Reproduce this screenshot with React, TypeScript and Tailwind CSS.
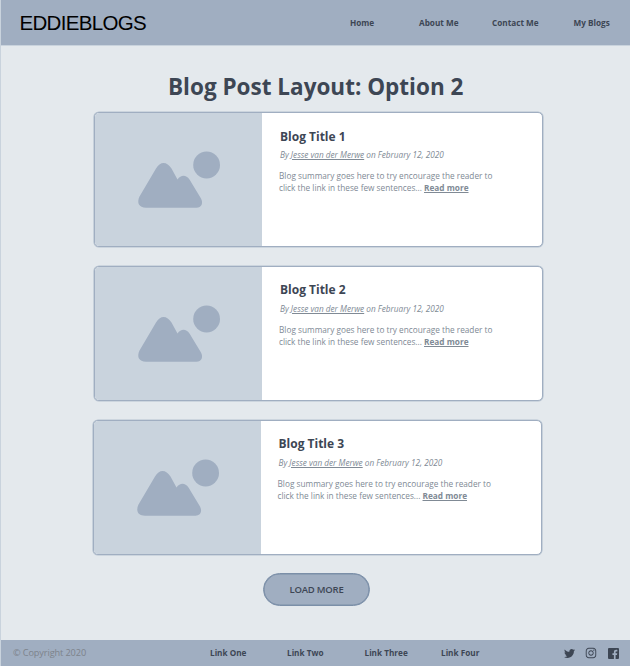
import React from "react";
import { FaTwitter, FaInstagram } from "react-icons/fa";

const posts = [
  { title: "Blog Title 1", box: "ml-[93px] mt-[9px]", heading: "pt-px" },
  { title: "Blog Title 2", box: "ml-[93px] mt-[19px]", heading: "pt-0" },
  { title: "Blog Title 3", box: "ml-[91.5px] mt-[18.5px]", heading: "pt-0" },
];

function Placeholder() {
  return (
    <svg className="h-[133px] w-[167px]" viewBox="0 0 167 133" fill="#a0aec1">
      <circle cx="111.6" cy="52" r="13.4" />
      <path d="M44.5 83.5 L61 55.5 C65 48 72 48 76.5 55.5 L82.5 66.5 C86 61.5 91 61.5 94.5 66.5 L106 85.5 C108.5 90.5 106.5 94.7 101.5 94.7 L51 94.7 C44 94.7 41.5 90 44.5 83.5 Z" />
    </svg>
  );
}

function PostCard({ title, box, heading }: { title: string; box: string; heading: string }) {
  return (
    <article className={`flex h-[135px] w-[449px] shrink-0 overflow-hidden rounded-[5px] border border-[#a0aec1] bg-white shadow-[0_0_0_0.6px_#b4c1cf] ${box}`}>
      <div className="w-[167px] shrink-0 bg-[#c9d3dd]">
        <Placeholder />
      </div>
      <div className="pl-[17px] pt-[14px] text-[#808a95]">
        <h2 className={`ml-px h-[20px] whitespace-nowrap text-[12px] font-bold leading-[18px] text-[#3d4654] ${heading}`}>{title}</h2>
        <p className="ml-px h-[23px] whitespace-nowrap text-[8.22px] italic leading-[16px]">
          By <span className="underline">Jesse van der Merwe</span> on February 12, 2020
        </p>
        <p className="whitespace-nowrap text-[8.25px] leading-[12px]">
          Blog summary goes here to try encourage the reader to
          <br />
          click the link in these few sentences... <a className="font-bold underline">Read more</a>
        </p>
      </div>
    </article>
  );
}

export default function App() {
  return (
    <div className="flex h-[666px] w-[630px] flex-col overflow-hidden border-l border-[#c9d3dd] bg-[#e4e9ed] font-['Open_Sans',sans-serif] text-[#3d4654]">
      <header className="flex h-[46px] shrink-0 items-center border-b border-[#c9d3dd] bg-[#a0aec1]">
        <div className="w-[349px] pl-[18.5px] font-['Liberation_Sans',Arial,sans-serif] text-[20.5px] leading-[42px] tracking-[-0.68px] text-black">EDDIEBLOGS</div>
        <nav className="flex whitespace-nowrap pt-px text-[8.2px] font-bold">
          <a className="w-[69px]">Home</a>
          <a className="w-[73px]">About Me</a>
          <a className="w-[81.5px]">Contact Me</a>
          <a>My Blogs</a>
        </nav>
      </header>
      <main className="flex h-[594px] shrink-0 flex-col">
        <h1 className="mt-[24px] h-[33px] whitespace-nowrap pl-[167px] text-[22.5px] font-bold leading-[33px]">Blog Post Layout: Option 2</h1>
        {posts.map((p) => (
          <PostCard key={p.title} {...p} />
        ))}
        <button className="ml-[262px] mt-[18.5px] h-[32.5px] w-[107px] shrink-0 rounded-full border border-[#7b8fa8] bg-[#a0aec1] pt-px text-[9.5px] font-semibold tracking-[-0.2px] shadow-[inset_0_0_0_0.6px_#7b8fa8]">LOAD MORE</button>
      </main>
      <footer className="flex h-[26px] shrink-0 items-center whitespace-nowrap bg-[#a0aec1] text-[8.2px] font-bold">
        <span className="w-[209px] pl-[12px] text-[9.2px] font-normal tracking-[-0.12px] text-[#7d838b]">© Copyright 2020</span>
        <a className="w-[77px]">Link One</a>
        <a className="w-[77.5px]">Link Two</a>
        <a className="w-[76.5px]">Link Three</a>
        <a className="w-[123px]">Link Four</a>
        <FaTwitter className="mr-[10px] size-[11px]" />
        <FaInstagram className="mr-[11px] size-[12px]" />
        <svg className="size-[11px]" viewBox="0 0 22 22" fill="currentColor">
          <path d="M2 0h18a2 2 0 0 1 2 2v18a2 2 0 0 1-2 2h-4.800v-8.200h2.800l.5-3.300h-3.300V8.700c0-1.200.4-1.800 1.800-1.800h1.700V3.800c-.6-.1-1.500-.2-2.500-.2-2.700 0-4.400 1.600-4.400 4.500v2.400H8.900v3.300H11.800V22H2a2 2 0 0 1-2-2V2a2 2 0 0 1 2-2z" />
        </svg>
      </footer>
    </div>
  );
}
